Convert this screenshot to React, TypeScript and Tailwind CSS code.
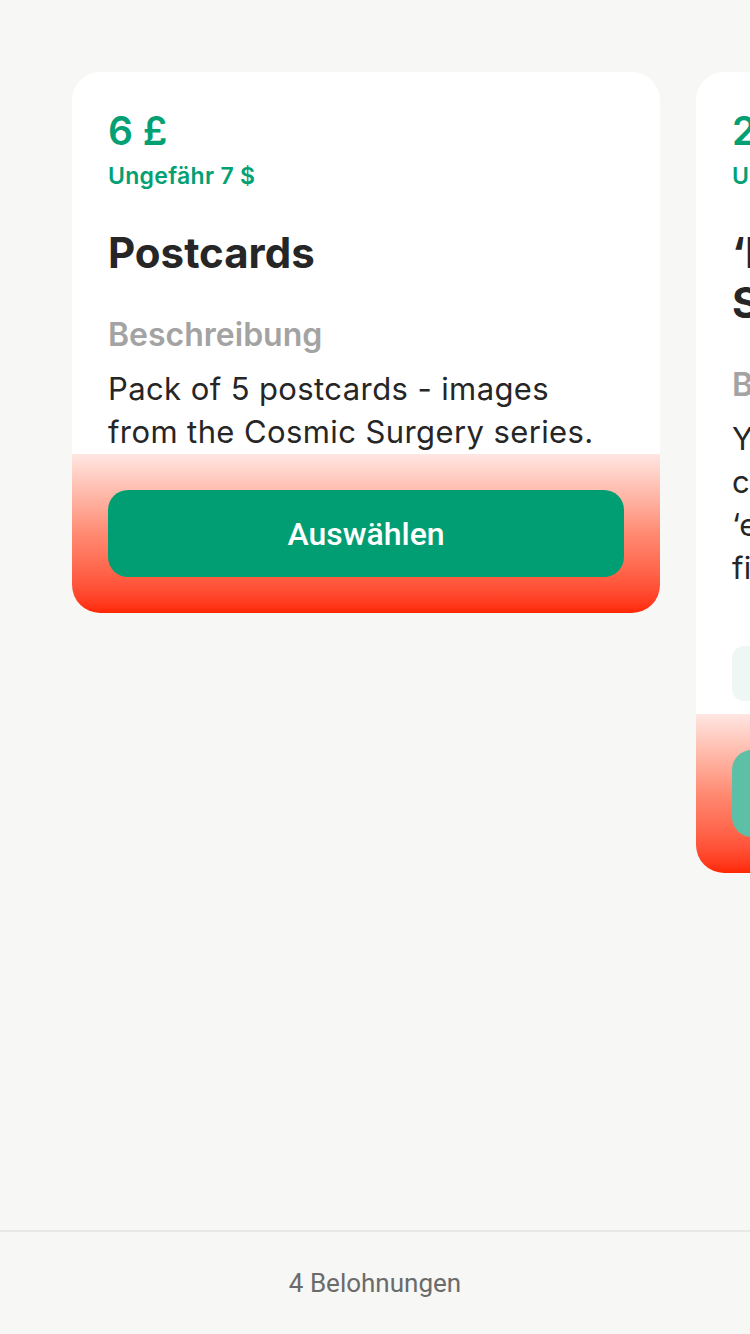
const rewards = [
  {
    price: "6 £",
    approx: "Ungefähr 7 $",
    title: "Postcards",
    description: "Pack of 5 postcards - images from the Cosmic Surgery series.",
    note: null as string | null,
    active: true,
  },
  {
    price: "25 £",
    approx: "Ungefähr 30 $",
    title: "‘Inside the Machine’ Signed Print",
    description:
      "You will receive a signed copy\ncomic art, packed with care and\n‘exclusive’ to campaign backers,\nfinished by hand.",
    note: "Begrenzt (50 übrig von 50)",
    active: false,
  },
];

function RewardCard({ reward }: { reward: (typeof rewards)[number] }) {
  return (
    <div className="w-[588px] shrink-0 overflow-hidden rounded-[28px] bg-white">
      <div className="px-9 pt-[35px] pb-[1px]">
        <div className="text-[39px] leading-[48px] font-semibold text-[#02a073]">{reward.price}</div>
        <div className="mt-[7px] text-[23px] leading-[28px] font-semibold tracking-[0.3px] text-[#02a073]">
          {reward.approx}
        </div>
        <h2 className="mt-[38px] text-[42px] leading-[50px] font-bold text-[#262626]">{reward.title}</h2>
        <div className="mt-[37px] text-[32px] leading-[40px] font-semibold text-[#a3a3a3]">Beschreibung</div>
        <p className="mt-[12px] text-[31px] leading-[43px] tracking-[0.4px] whitespace-pre-line text-[#262626]">
          {reward.description}
        </p>
        {reward.note && (
          <div className="mt-[57px] mb-[12px] h-[55px] rounded-[12px] bg-[#eff7f4] px-5 text-[22px] leading-[55px] text-[#02a073]">
            {reward.note}
          </div>
        )}
      </div>
      <div className="bg-gradient-to-b from-[#ffe6e2] via-[#ff8a72] to-[#ff2600] px-9 py-9">
        <button
          className={
            reward.active
              ? "h-[87px] w-full rounded-[20px] bg-[#029e73] text-[32px] font-medium text-white"
              : "h-[87px] w-full rounded-[20px] bg-[#5dc0a6] text-[32px] font-medium text-white"
          }
          style={{ fontFamily: "Roboto, sans-serif" }}
        >
          Auswählen
        </button>
      </div>
    </div>
  );
}

export default function App() {
  return (
    <div
      className="flex h-[1334px] w-[750px] flex-col overflow-hidden bg-[#f7f7f5]"
      style={{ fontFamily: "Inter, 'Noto Sans', sans-serif" }}
    >
      <div className="flex flex-1 items-start gap-9 overflow-hidden pt-[72px] pl-[72px]">
        {rewards.map((r, i) => (
          <RewardCard key={i} reward={r} />
        ))}
      </div>
      <div className="flex h-[104px] items-center justify-center border-t-2 border-[#e8e8e6]">
        <span className="text-[26px] text-[#6b6b6b]" style={{ fontFamily: "Roboto, sans-serif" }}>
          4 Belohnungen
        </span>
      </div>
    </div>
  );
}
